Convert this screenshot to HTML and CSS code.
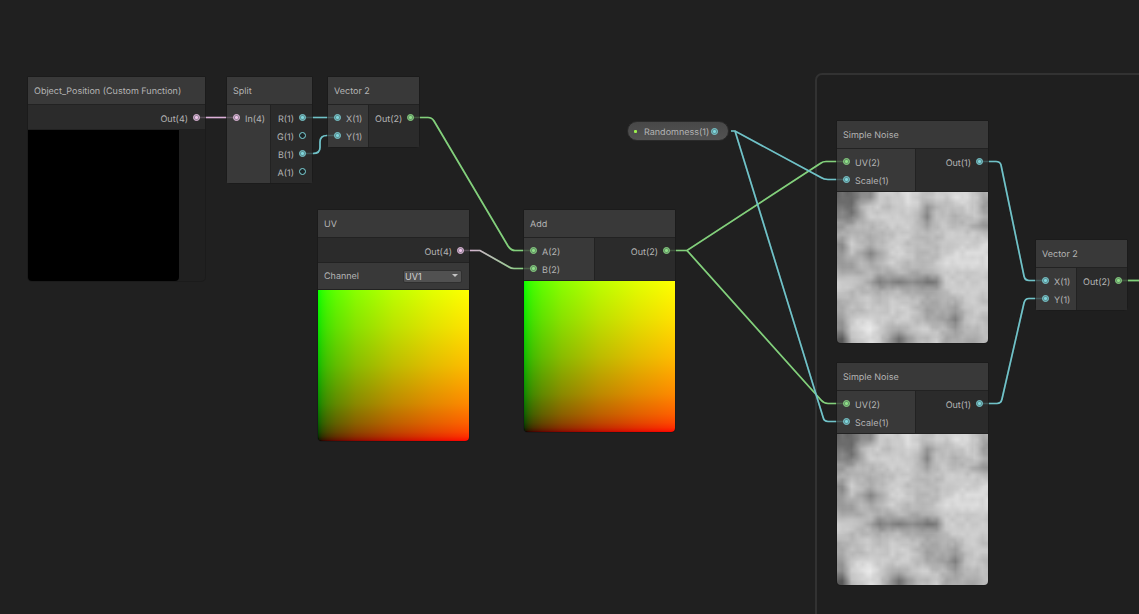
FILE: index.html
```html
<!DOCTYPE html>
<html lang="en">
<head>
<meta charset="utf-8">
<title>Shader Graph</title>
<link rel="stylesheet" href="styles.css">
</head>
<body>
<main class="graph">
  <div class="group"></div>

  <svg class="wires" aria-hidden="true">
    <defs>
      <linearGradient id="fade" gradientUnits="userSpaceOnUse" x1="466" y1="0" x2="526" y2="0">
        <stop offset="0" stop-color="#dcb4d8"/><stop offset="1" stop-color="#83d07c"/>
      </linearGradient>
      <g id="edges">
        <path class="wire pink" d="M196 117.500H236"/>
        <path class="wire teal" d="M303 117.500H337"/>
        <path class="wire teal" d="M303 153.500H313Q320 153.500 320 147.500V142Q320 135.500 327 135.500H337"/>
        <path class="wire green" d="M410 117.500H428Q432 117.500 434 121L508 246Q511 250.500 515 250.500H532"/>
        <path class="wire" stroke="url(#fade)" d="M460 250.500H480L509 267Q511 268.500 514 268.500H532"/>
        <path class="wire green" d="M666 250.500H687L821 163Q823 161.500 826 161.500H846"/>
        <path class="wire green" d="M687 250.500L821 400Q824 403.500 828 403.500H846"/>
        <path class="wire teal" d="M731 131H735L821 177.500Q824 179.500 828 179.500H846"/>
        <path class="wire teal" d="M735 131L823 417Q824 421.500 828 421.500H846"/>
        <path class="wire teal" d="M979 161.500H996Q1000 161.500 1001 165L1024 276Q1025 280.500 1029 280.500H1045"/>
        <path class="wire teal" d="M979 403.500H997Q1001 403.500 1002 399L1024 303Q1025 298.500 1029 298.500H1045"/>
        <path class="wire green" d="M1118 280.500H1145"/>
      </g>
    </defs>
    <use href="#edges"/>
  </svg>

  <section class="node custom-function">
    <h2 class="title">Object_Position (Custom Function)</h2>
    <div class="ports"><ul class="outputs"><li>Out(4)<i class="dot pink on"></i></li></ul></div>
    <div class="preview black"></div>
  </section>

  <section class="node split">
    <h2 class="title">Split</h2>
    <div class="ports">
      <ul class="inputs"><li><i class="dot pink on"></i>In(4)</li></ul>
      <ul class="outputs">
        <li>R(1)<i class="dot teal on"></i></li>
        <li>G(1)<i class="dot teal"></i></li>
        <li>B(1)<i class="dot teal on"></i></li>
        <li>A(1)<i class="dot teal"></i></li>
      </ul>
    </div>
  </section>

  <section class="node vector vector-a">
    <h2 class="title">Vector 2</h2>
    <div class="ports">
      <ul class="inputs"><li><i class="dot teal on"></i>X(1)</li><li><i class="dot teal on"></i>Y(1)</li></ul>
      <ul class="outputs"><li>Out(2)<i class="dot green on"></i></li></ul>
    </div>
  </section>

  <section class="node uv">
    <h2 class="title">UV</h2>
    <div class="ports"><ul class="outputs"><li>Out(4)<i class="dot pink on"></i></li></ul></div>
    <div class="control">
      <label for="channel">Channel</label>
      <span class="dropdown"><select id="channel"><option>UV1</option></select></span>
    </div>
    <div class="preview ramp"></div>
  </section>

  <section class="node add">
    <h2 class="title">Add</h2>
    <div class="ports">
      <ul class="inputs"><li><i class="dot green on"></i>A(2)</li><li><i class="dot green on"></i>B(2)</li></ul>
      <ul class="outputs"><li>Out(2)<i class="dot green on"></i></li></ul>
    </div>
    <div class="preview ramp"></div>
  </section>

  <div class="property"><i class="exposed"></i><span class="name">Randomness(1)</span><i class="dot teal on"></i></div>

  <section class="node noise noise-a">
    <h2 class="title">Simple Noise</h2>
    <div class="ports">
      <ul class="inputs"><li><i class="dot green on"></i>UV(2)</li><li><i class="dot teal on"></i>Scale(1)</li></ul>
      <ul class="outputs"><li>Out(1)<i class="dot teal on"></i></li></ul>
    </div>
    <canvas class="preview" width="151" height="151"></canvas>
  </section>

  <section class="node noise noise-b">
    <h2 class="title">Simple Noise</h2>
    <div class="ports">
      <ul class="inputs"><li><i class="dot green on"></i>UV(2)</li><li><i class="dot teal on"></i>Scale(1)</li></ul>
      <ul class="outputs"><li>Out(1)<i class="dot teal on"></i></li></ul>
    </div>
    <canvas class="preview" width="151" height="151"></canvas>
  </section>

  <section class="node vector vector-b">
    <h2 class="title">Vector 2</h2>
    <div class="ports">
      <ul class="inputs"><li><i class="dot teal on"></i>X(1)</li><li><i class="dot teal on"></i>Y(1)</li></ul>
      <ul class="outputs"><li>Out(2)<i class="dot green on"></i></li></ul>
    </div>
  </section>

  <svg class="wires stubs" aria-hidden="true"><use href="#edges"/></svg>
</main>
<script src="noise.js"></script>
</body>
</html>
```

FILE: styles.css
```css
* { box-sizing: border-box; }

body {
  margin: 0;
  background: #202020;
  color: #b4b4b4;
  font-family: Inter, "Liberation Sans", sans-serif;
  font-size: 9px;
  text-rendering: geometricPrecision;
}

.graph {
  position: relative;
  min-height: 100vh;
  overflow: hidden;
}

.group {
  position: absolute;
  left: 815px;
  top: 73px;
  right: -20px;
  bottom: -20px;
  border: 2px solid #323232;
  border-radius: 7px;
  background: #1f1f1f;
}

.wires {
  position: absolute;
  left: 0;
  top: 0;
  width: 100%;
  height: 100%;
  pointer-events: none;
}
.stubs { z-index: 1; opacity: 0.25; }
.wire { fill: none; stroke-width: 1.7; }
.wire.pink { stroke: #dcb0d8; }
.wire.teal { stroke: #70c2c8; }
.wire.green { stroke: #83d07c; }

.node {
  position: absolute;
  border-radius: 1px 1px 4px 4px;
  box-shadow: 0 0 0 1px #1b1b1b;
}
.custom-function { left: 28px; top: 77px; width: 177px; }
.split { left: 227px; top: 77px; width: 85px; }
.vector { width: 91px; }
.vector-a { left: 328px; top: 77px; }
.vector-b { left: 1036px; top: 240px; }
.uv { left: 318px; top: 210px; width: 151px; }
.add { left: 524px; top: 210px; width: 151px; }
.noise { width: 151px; }
.noise-a { left: 837px; top: 121px; }
.noise-b { left: 837px; top: 363px; }

.title {
  margin: 0;
  padding: 2px 6px 0;
  background: #393939;
  border-bottom: 1px solid #222;
  font-size: 9px;
  font-weight: 400;
  line-height: 25px;
  white-space: nowrap;
}

.ports { display: flex; background: #2b2b2b; }
.ports ul { margin: 0; padding: 4px 6px 2px; list-style: none; }
.ports li { display: flex; align-items: center; gap: 5px; height: 18px; padding-top: 2px; white-space: nowrap; }
.ports .inputs { background: #393939; border-right: 1px solid #222; }
.ports .outputs { flex: 1; padding-right: 5px; }
.outputs li { justify-content: flex-end; }
.split .inputs { width: 44px; }
.split .outputs { padding-right: 6px; }
.vector .inputs { width: 41px; }
.add .inputs { width: 71px; }
.noise .inputs { width: 79px; }

.dot {
  position: relative;
  z-index: 2;
  flex: none;
  width: 7px;
  height: 7px;
  border: 1px solid;
  border-radius: 50%;
  background: #1c2426;
}
.ports .dot { margin-bottom: 3px; }
.dot.pink { color: #f0c4ea; }
.dot.teal { color: #7ed6dc; }
.dot.green { color: #8fe087; }
.dot.on { background: radial-gradient(circle, currentColor 1px, #3c4a4a 3px); }

.control {
  display: flex;
  align-items: center;
  justify-content: space-between;
  height: 27px;
  padding: 0 7px 0 6px;
  border-top: 1px solid #222;
  background: #393939;
}
.dropdown { position: relative; width: 59px; }
.dropdown::after {
  content: "";
  position: absolute;
  right: 4px;
  top: 4px;
  border: 3px solid transparent;
  border-top-color: #c4c4c4;
  border-bottom: 0;
  pointer-events: none;
}
.dropdown select {
  display: block;
  width: 100%;
  height: 13px;
  padding: 0 1px;
  appearance: none;
  border: 1px solid #303030;
  border-radius: 2px;
  background: #515151;
  color: #d2d2d2;
  font: inherit;
  line-height: 11px;
}

.preview {
  display: block;
  width: 151px;
  height: 152px;
  border-top: 1px solid #222;
  border-radius: 0 0 4px 4px;
}
.black { background: #000; background-clip: padding-box; }
.ramp {
  background:
    linear-gradient(to right, #000, #190000 1%, #300000 3%, #460000 6%, #610000 12%, #890000 25%, #bc0000 50%, #e10000 75%, #f00),
    linear-gradient(to top, #000, #001900 1%, #003000 3%, #004600 6%, #006100 12%, #008900 25%, #00bc00 50%, #00e100 75%, #0f0);
  background-blend-mode: screen;
  background-clip: padding-box;
}

.property {
  position: absolute;
  left: 627px;
  top: 121px;
  display: flex;
  align-items: center;
  width: 102px;
  height: 20px;
  padding: 0 10px 0 6px;
  border: 1px solid #2a2a2a;
  border-radius: 10px;
  background: linear-gradient(#484848, #525252);
}
.property .name { flex: 1; padding: 3px 0 0 7px; line-height: 15px; }
.exposed { width: 3px; height: 3px; border-radius: 1px; background: #9bef4e; }
```

FILE: noise.js
```js
// Value noise: a 16x16 lattice of grey levels with a fine grain on top.
const lattice = [
  "6688cccdcbccddca",
  "76accbcdc9bbccc9",
  "87acccccb8bbabca",
  "9abbbcccb9bcbba9",
  "abbabbccbbbccccb",
  "8cbabccbbbbccccd",
  "9ba8acdcbbbcdddd",
  "99babccbbbcddddd",
  "aaabaabaaabccccc",
  "ccba7878877ccccc",
  "cbbbabbaaaabcccc",
  "abccbcccbaabaccb",
  "abbcccccb9aa9bcc",
  "9cddccccbaa97bcb",
  "8cdecbabccbb9bbb",
  "5bcdc969bbcaaaab"
].map(row => [...row].map(v => parseInt(v, 16) * 16));

const size = 151;
const clamp = n => Math.max(0, Math.min(15, n));
const mix = (a, b, t) => a + (b - a) * t;
const hash = (x, y) => {
  const s = Math.sin(x * 12.9898 + y * 78.233) * 43758.5453;
  return s - Math.floor(s) - 0.5;
};

function sample(fx, fy, value) {
  const x = Math.floor(fx), y = Math.floor(fy);
  const u = fx - x, v = fy - y;
  return mix(
    mix(value(x, y), value(x + 1, y), u),
    mix(value(x, y + 1), value(x + 1, y + 1), u),
    v
  );
}

for (const canvas of document.querySelectorAll("canvas.preview")) {
  const ctx = canvas.getContext("2d");
  const image = ctx.createImageData(size, size);
  for (let y = 0; y < size; y++) {
    for (let x = 0; x < size; x++) {
      const base = sample(x / size * 16 - 0.5, y / size * 16 - 0.5, (i, j) => lattice[clamp(j)][clamp(i)]);
      const grain = sample(x / 5, y / 5, hash) * 16;
      const level = base + grain + 10;
      image.data.set([level, level, level, 255], (y * size + x) * 4);
    }
  }
  ctx.putImageData(image, 0, 0);
}
```
